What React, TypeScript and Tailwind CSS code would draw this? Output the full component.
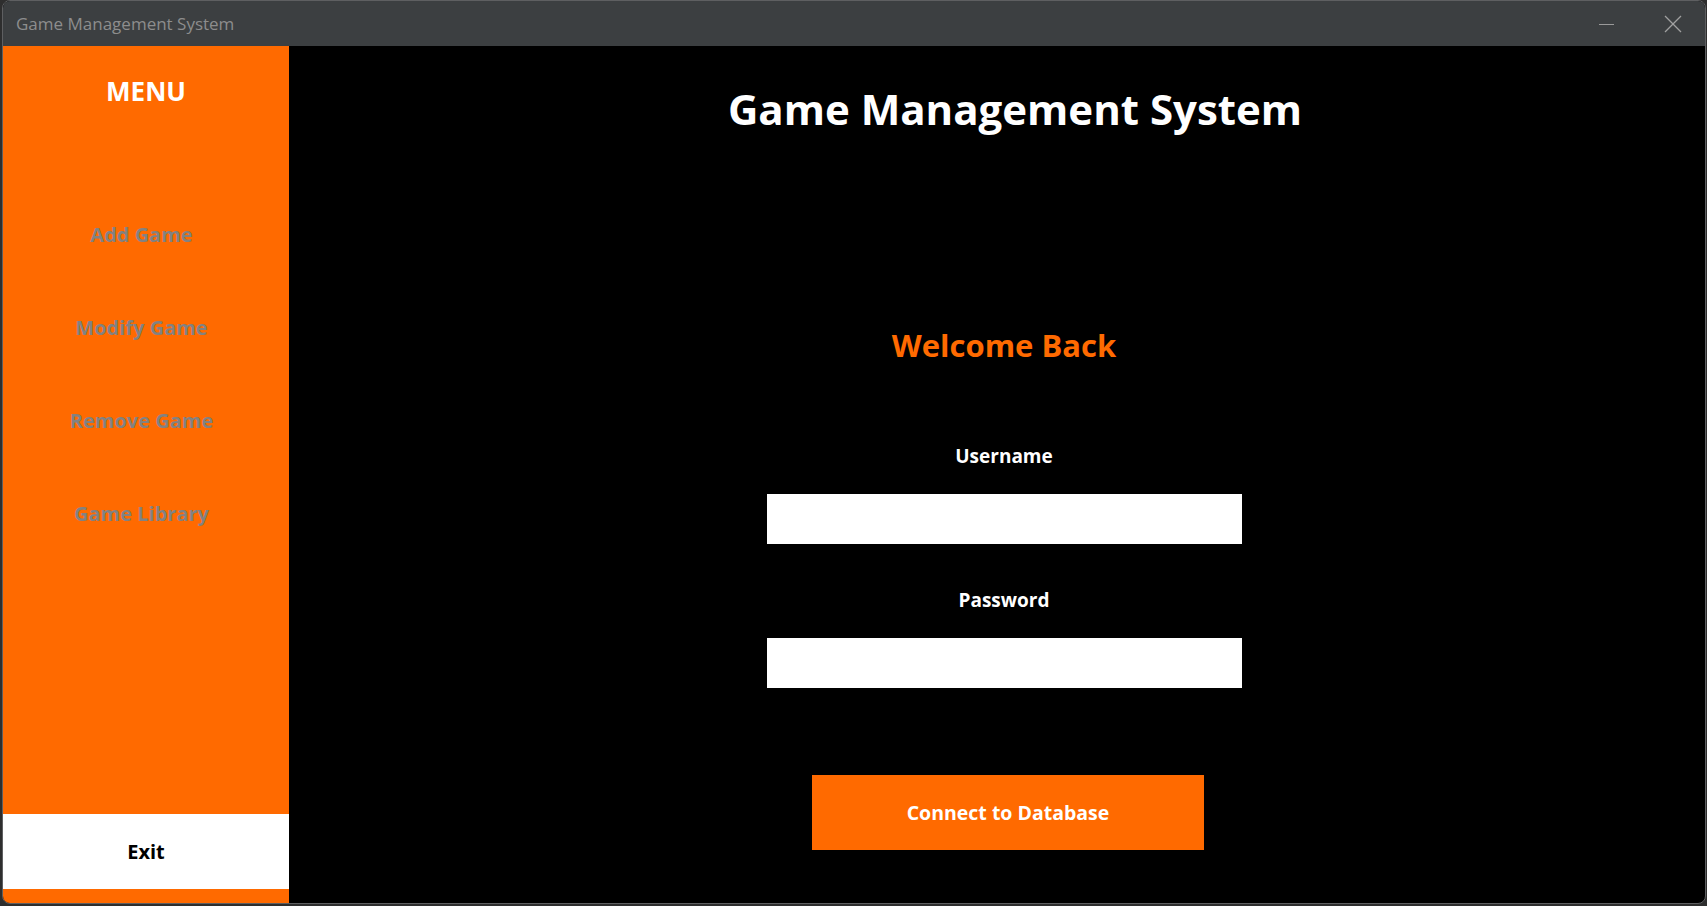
import React from "react";

const FONT = { fontFamily: '"Open Sans", "Noto Sans", sans-serif' };

export default function App() {
  const items = ["Add Game", "Modify Game", "Remove Game", "Game Library"];
  return (
    <div
      className="w-[1707px] h-[906px] bg-[#2e2e2e] pl-[2px] pr-[1px] pb-[2px] overflow-hidden"
      style={FONT}
    >
      <div className="h-full flex flex-col rounded-[8px] border border-[#5e5f61] overflow-hidden bg-black">
        {/* title bar */}
        <div className="h-[45px] shrink-0 bg-[#3c3f41] flex items-center pl-[13px] pr-[23px]">
          <span className="text-[17px] text-[#8d8d8d] leading-none">Game Management System</span>
          <div className="ml-auto flex items-center">
            <svg width="16" height="16" viewBox="0 0 16 16" className="mr-[49px]">
              <line x1="0" y1="8.5" x2="15" y2="8.5" stroke="#9a9a9a" strokeWidth="1" />
            </svg>
            <svg width="18" height="18" viewBox="0 0 18 18">
              <line x1="1" y1="1" x2="17" y2="17" stroke="#a0a0a0" strokeWidth="1.2" />
              <line x1="17" y1="1" x2="1" y2="17" stroke="#a0a0a0" strokeWidth="1.2" />
            </svg>
          </div>
        </div>
        {/* body */}
        <div className="flex-1 flex min-h-0">
          {/* sidebar */}
          <div className="w-[286px] shrink-0 bg-[#ff6a00] flex flex-col">
            <div className="h-[91px] flex items-center justify-center">
              <span className="text-[26px] font-bold text-white">MENU</span>
            </div>
            <div className="h-[51px]" />
            {items.map((t) => (
              <div key={t} className="h-[93px] flex items-center justify-center pr-[9px]">
                <span className="text-[20px] font-bold text-[#828282]">{t}</span>
              </div>
            ))}
            <div className="flex-1" />
            <div className="h-[75px] bg-white flex items-center justify-center">
              <span className="text-[20px] font-bold text-black">Exit</span>
            </div>
            <div className="h-[14px]" />
          </div>
          {/* main */}
          <div className="flex-1 flex flex-col items-center pl-[14px]">
            <div className="h-[126px] flex items-center ml-[22px]">
              <h1 className="text-[42px] font-bold text-white leading-none">Game Management System</h1>
            </div>
            <div className="mt-[148px] h-[50px] flex items-center">
              <span className="text-[31px] font-bold text-[#ff6a00]">Welcome Back</span>
            </div>
            <div className="mt-[71px] h-[30px] flex items-center">
              <span className="text-[19px] font-bold text-white">Username</span>
            </div>
            <div className="mt-[23px] w-[475px] h-[50px] bg-white" />
            <div className="mt-[41px] h-[30px] flex items-center">
              <span className="text-[19px] font-bold text-white">Password</span>
            </div>
            <div className="mt-[23px] w-[475px] h-[50px] bg-white" />
            <div className="mt-[87px] ml-[8px] w-[392px] h-[75px] bg-[#ff6a00] flex items-center justify-center">
              <span className="text-[19.5px] font-bold text-white">Connect to Database</span>
            </div>
          </div>
        </div>
      </div>
    </div>
  );
}
